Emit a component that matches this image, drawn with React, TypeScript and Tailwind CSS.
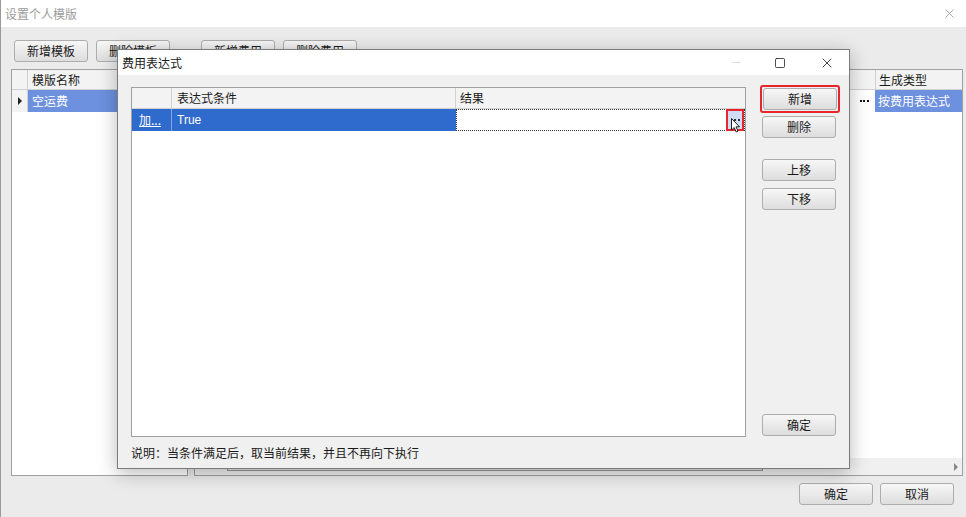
import { Minus, Square, X } from "lucide-react";

const font = { fontFamily: '"Noto Sans CJK SC", "Noto Sans", sans-serif' };

const Btn = ({ label, className = "" }: { label: string; className?: string }) => (
  <button
    className={`flex h-[22px] w-[74px] items-center justify-center rounded-[3px] border border-[#adadad] bg-gradient-to-b from-[#f7f7f7] to-[#dddddd] text-[12px] text-[#1a1a1a] ${className}`}
  >
    {label}
  </button>
);

const Dots = ({ color = "#111" }: { color?: string }) => (
  <div className="flex items-center gap-[1.5px]">
    <div className="h-[2px] w-[2px]" style={{ background: color }} />
    <div className="h-[2px] w-[2px]" style={{ background: color }} />
    <div className="h-[2px] w-[2px]" style={{ background: color }} />
  </div>
);

export default function App() {
  return (
    <div
      className="relative h-[517px] w-[966px] overflow-hidden border-l border-[#9a9a9a] bg-[#ebebec] text-[12px] text-[#1a1a1a]"
      style={font}
    >
      {/* outer title bar */}
      <div className="flex h-[27px] items-center justify-between bg-white pl-[4px] pr-[9px]">
        <span className="text-[12px] text-[#9b9b9b]">设置个人模版</span>
        <X size={15} strokeWidth={1} className="text-[#777]" />
      </div>

      {/* outer toolbar */}
      <div className="ml-[13px] mt-[13px] flex">
        <Btn label="新增模板" />
        <Btn label="删除模板" className="ml-[8px]" />
        <Btn label="新增费用" className="ml-[31px]" />
        <Btn label="删除费用" className="ml-[8px]" />
      </div>

      {/* outer grids */}
      <div className="ml-[10px] mt-[7px] flex h-[407px] w-[952px] gap-[6px]">
        <div className="flex w-[177px] flex-col border border-[#a0a0a0] bg-white">
          <div className="flex h-[20px] border-b border-[#d0d0d0] bg-[#f3f3f3]">
            <div className="w-[16px] border-r border-[#d0d0d0]" />
            <div className="pl-[4px] leading-[20px]">模版名称</div>
          </div>
          <div className="flex h-[22px]">
            <div className="flex w-[16px] items-center justify-center border-r border-[#d0d0d0] bg-[#f3f3f3]">
              <div className="h-0 w-0 border-y-[4px] border-l-[4px] border-y-transparent border-l-[#222]" />
            </div>
            <div className="flex-1 bg-[#6d90df] pl-[4px] leading-[22px] text-white">空运费</div>
          </div>
        </div>
        <div className="flex flex-1 flex-col border border-[#a0a0a0] bg-white">
          <div className="flex h-[20px] justify-end border-b border-[#d0d0d0] bg-[#f3f3f3]">
            <div className="w-[87px] border-l border-[#d0d0d0] pl-[3px] leading-[20px]">生成类型</div>
          </div>
          <div className="flex h-[22px] justify-end">
            <div className="flex w-[22px] items-center justify-center">
              <Dots />
            </div>
            <div className="w-[87px] bg-[#6d90df] pl-[3px] leading-[22px] text-white">按费用表达式</div>
          </div>
          <div className="flex-1" />
          <div className="flex h-[17px] items-center bg-[#f0f0f0]">
            <div className="ml-[32px] h-[9px] w-[536px] border border-[#9a9a9a] bg-[#e6e6e6]" />
            <div className="flex-1" />
            <div className="mr-[4px] h-0 w-0 border-y-[4px] border-l-[4px] border-y-transparent border-l-[#888]" />
          </div>
        </div>
      </div>

      {/* outer bottom buttons */}
      <div className="mr-[12px] mt-[7px] flex justify-end gap-[7px]">
        <Btn label="确定" />
        <Btn label="取消" />
      </div>

      {/* dialog */}
      <div className="absolute left-[116px] top-[49px] flex h-[420px] w-[733px] flex-col border border-[#7a7a7a] bg-[#f0f0f0] shadow-[0_4px_18px_rgba(0,0,0,0.28)]">
        <div className="flex h-[25px] items-center justify-between bg-white pl-[4px]">
          <span className="text-[12px]">费用表达式</span>
          <div className="flex h-full items-center">
            <div className="flex w-[45px] justify-center">
              <Minus size={13} strokeWidth={1} className="text-[#bbb]" />
            </div>
            <div className="flex w-[45px] justify-center pr-[4px]">
              <Square size={12} strokeWidth={1.5} className="text-[#111]" />
            </div>
            <div className="flex w-[45px] justify-center">
              <X size={16} strokeWidth={1.2} className="text-[#111]" />
            </div>
          </div>
        </div>

        <div className="flex flex-1 pl-[13px] pt-[12px]">
          <div className="flex flex-col">
            <div className="flex h-[350px] w-[615px] flex-col border border-[#a0a0a0] bg-white">
              <div className="flex h-[21px] border-b border-[#d0d0d0] bg-[#f3f3f3] leading-[20px]">
                <div className="w-[40px] border-r border-[#d0d0d0]" />
                <div className="w-[284px] border-r border-[#d0d0d0] pl-[5px]">表达式条件</div>
                <div className="flex-1 pl-[4px]">结果</div>
              </div>
              <div className="flex h-[22px]">
                <div className="w-[40px] border-r border-[#7ea4e4] bg-[#2f6bcc] pl-[7px] leading-[22px] text-white underline">
                  加...
                </div>
                <div
                  className="w-[284px] bg-[#2f6bcc] pl-[5px] leading-[22px] text-white"
                  style={{ fontFamily: '"Liberation Sans", "Noto Sans CJK SC", sans-serif' }}
                >
                  True
                </div>
                <div className="relative flex flex-1 items-center justify-end border border-dotted border-[#333] pr-[2px]">
                  <div className="flex h-[18px] w-[14px] items-center justify-center bg-[#cfdcf3] outline-[2.5px] outline-[#e8252c]">
                    <Dots color="#333" />
                  </div>
                  <svg width="11" height="16" viewBox="0 0 11 16" className="absolute right-[2px] top-[8px]">
                    <path
                      d="M0.5 0.5 L0.5 12 L3.2 9.5 L5.2 14 L7 13.2 L5 8.8 L8.5 8.8 Z"
                      fill="white"
                      stroke="#222"
                      strokeWidth="1"
                    />
                  </svg>
                </div>
              </div>
            </div>
            <div className="pt-[7px] text-[12px]">说明：当条件满足后，取当前结果，并且不再向下执行</div>
          </div>

          <div className="ml-[16px] flex flex-col">
            <div className="rounded-[1px] p-[1px] outline-[2.5px] outline-[#e8252c]">
              <Btn label="新增" />
            </div>
            <Btn label="删除" className="mt-[5px]" />
            <Btn label="上移" className="mt-[21px]" />
            <Btn label="下移" className="mt-[7px]" />
            <Btn label="确定" className="mt-[204px]" />
          </div>
        </div>
      </div>
    </div>
  );
}
